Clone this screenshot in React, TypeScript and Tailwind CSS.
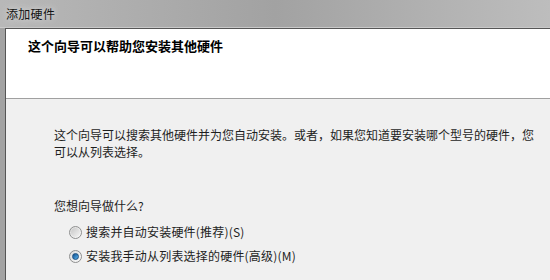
const font = { fontFamily: '"Noto Sans CJK SC", "Noto Sans", sans-serif' };

function Radio({ checked, label }: { checked?: boolean; label: string }) {
  return (
    <div className="flex items-center h-[24px]">
      <span className="w-[13px] h-[13px] rounded-full border border-[#8e8f8f] bg-gradient-to-br from-[#dcdcdc] to-[#fbfbfb] flex items-center justify-center shrink-0">
        {checked ? (
          <span className="w-[7px] h-[7px] rounded-full bg-gradient-to-br from-[#0c4e8e] to-[#5cb6f0] border border-[#1a4e7f]" />
        ) : (
          <span className="w-[9px] h-[9px] rounded-full bg-gradient-to-br from-[#c8c8c8] to-[#f4f4f4]" />
        )}
      </span>
      <span className="ml-[4px] text-[12px] tracking-[0.2px] text-[#1e1e1e]">{label}</span>
    </div>
  );
}

export default function App() {
  return (
    <div className="w-[550px] h-[280px] overflow-hidden flex flex-col bg-[#a6a6a6]" style={font}>
      {/* title bar */}
      <div className="h-[28px] shrink-0 bg-gradient-to-r from-[#b8b8b8] via-[#a2a2a2] to-[#bdbdbd] flex items-center pl-[6px] border-b border-[#c9c9c9]">
        <span className="text-[12px] tracking-[0.3px] text-[#141414] [text-shadow:0_0_6px_#e8e8e8]">添加硬件</span>
      </div>
      <div className="flex flex-1">
        <div className="w-[5px] shrink-0 bg-[#a3a3a3]" />
        <div className="flex-1 flex flex-col border-l border-t border-[#565656]">
          {/* header */}
          <div className="h-[70px] shrink-0 bg-white border-b border-[#a0a0a0] pl-[22px] pt-[9px]">
            <div className="text-[13px] leading-[16px] font-bold text-black">这个向导可以帮助您安装其他硬件</div>
          </div>
          {/* body */}
          <div className="flex-1 bg-[#f0f0f0] pl-[48px] pt-[27px]">
            <p className="w-[486px] text-[12px] leading-[17px] text-[#1e1e1e]">
              这个向导可以搜索其他硬件并为您自动安装。或者，如果您知道要安装哪个型号的硬件，您可以从列表选择。
            </p>
            <p className="mt-[37px] text-[12px] leading-[17px] text-[#1e1e1e]">您想向导做什么?</p>
            <div className="mt-[6px] pl-[15px] flex flex-col">
              <Radio label="搜索并自动安装硬件(推荐)(S)" />
              <Radio checked label="安装我手动从列表选择的硬件(高级)(M)" />
            </div>
          </div>
        </div>
      </div>
    </div>
  );
}
